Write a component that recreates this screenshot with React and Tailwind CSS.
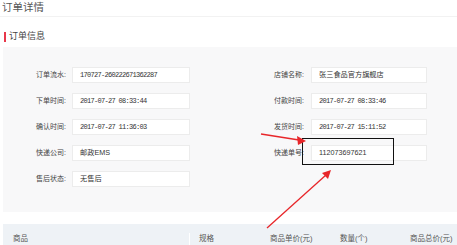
const font = { fontFamily: '"Liberation Sans", "Noto Sans CJK SC", sans-serif' }
const mono = { fontFamily: '"Liberation Mono", "Noto Sans CJK SC", monospace' }

const rows = [
  ['订单流水:', '170727-260222671362287', '店铺名称:', '张三食品官方旗舰店'],
  ['下单时间:', '2017-07-27 08:33:44', '付款时间:', '2017-07-27 08:33:46'],
  ['确认时间:', '2017-07-27 11:36:03', '发货时间:', '2017-07-27 15:11:52'],
  ['快递公司:', '邮政EMS', '快递单号:', '112073697621'],
  ['售后状态:', '无售后', null, null],
]

function Field({ value, sans }) {
  const ascii = !sans && /^[\x20-\x7e]+$/.test(value)
  return (
    <div className="h-[16px] bg-white border border-[#ececec] flex items-center pl-[7px] text-[#333] whitespace-nowrap overflow-hidden">
      {ascii ? (
        <span className="text-[7px] tracking-[-0.7px]" style={mono}>{value}</span>
      ) : (
        <span className="text-[7.2px]">{value}</span>
      )}
    </div>
  )
}

export default function App() {
  return (
    <div className="relative w-[457px] h-[245px] overflow-hidden bg-white" style={font}>
      {/* page title */}
      <div className="h-[17px] pl-[2px] flex items-center border-b border-[#f2f2f2] text-[10.5px] text-[#555]">
        订单详情
      </div>

      {/* section heading */}
      <div className="mt-[14px] h-[11px] ml-[4px] flex items-center gap-[3px]">
        <span className="w-[2px] h-[10px] bg-[#e8374a]" />
        <span className="text-[9px] text-[#444] leading-none">订单信息</span>
      </div>

      {/* info panel */}
      <div className="mt-[5px] ml-[3px] bg-[#f8f8f9] pt-[20px] pb-[25px] grid grid-cols-[33px_36px_118px_84px_37px_116px] gap-y-[10px] items-center">
        {rows.map(([l1, v1, l2, v2]) => (
          <div key={l1} className="contents">
            <span />
            <span className="text-[7px] text-[#444] whitespace-nowrap">{l1}</span>
            <Field value={v1} />
            <span />
            {l2 ? <span className="text-[7px] text-[#444] whitespace-nowrap">{l2}</span> : <span />}
            {v2 ? <Field value={v2} sans={l2 === '快递单号:'} /> : <span />}
          </div>
        ))}
      </div>

      {/* goods table header */}
      <div className="mt-[12px] ml-[3px] h-[28px] bg-[#eef2f6] flex items-start pt-[9px] text-[7.5px] text-[#555]">
        <div className="w-[187px] pl-[10px] border-r border-white h-[19px]">商品</div>
        <div className="w-[80px] pl-[9px]">规格</div>
        <div className="w-[70px]">商品单价(元)</div>
        <div className="w-[70px]">数量(个)</div>
        <div>商品总价(元)</div>
      </div>

      {/* annotation: highlight box */}
      <div className="absolute left-[302px] top-[138px] w-[92px] h-[27px] border-[1.5px] border-[#111]" />

      {/* annotation: arrows */}
      <svg className="absolute inset-0 pointer-events-none" width="457" height="245" viewBox="0 0 457 245">
        <line x1="261" y1="134" x2="299" y2="140" stroke="#e8262a" strokeWidth="1.3" />
        <polygon points="306,141 297,136 298,145" fill="#e8262a" />
        <line x1="267" y1="228" x2="326" y2="175" stroke="#e8262a" strokeWidth="1.3" />
        <polygon points="331,170 322,173 328,179" fill="#e8262a" />
      </svg>
    </div>
  )
}
